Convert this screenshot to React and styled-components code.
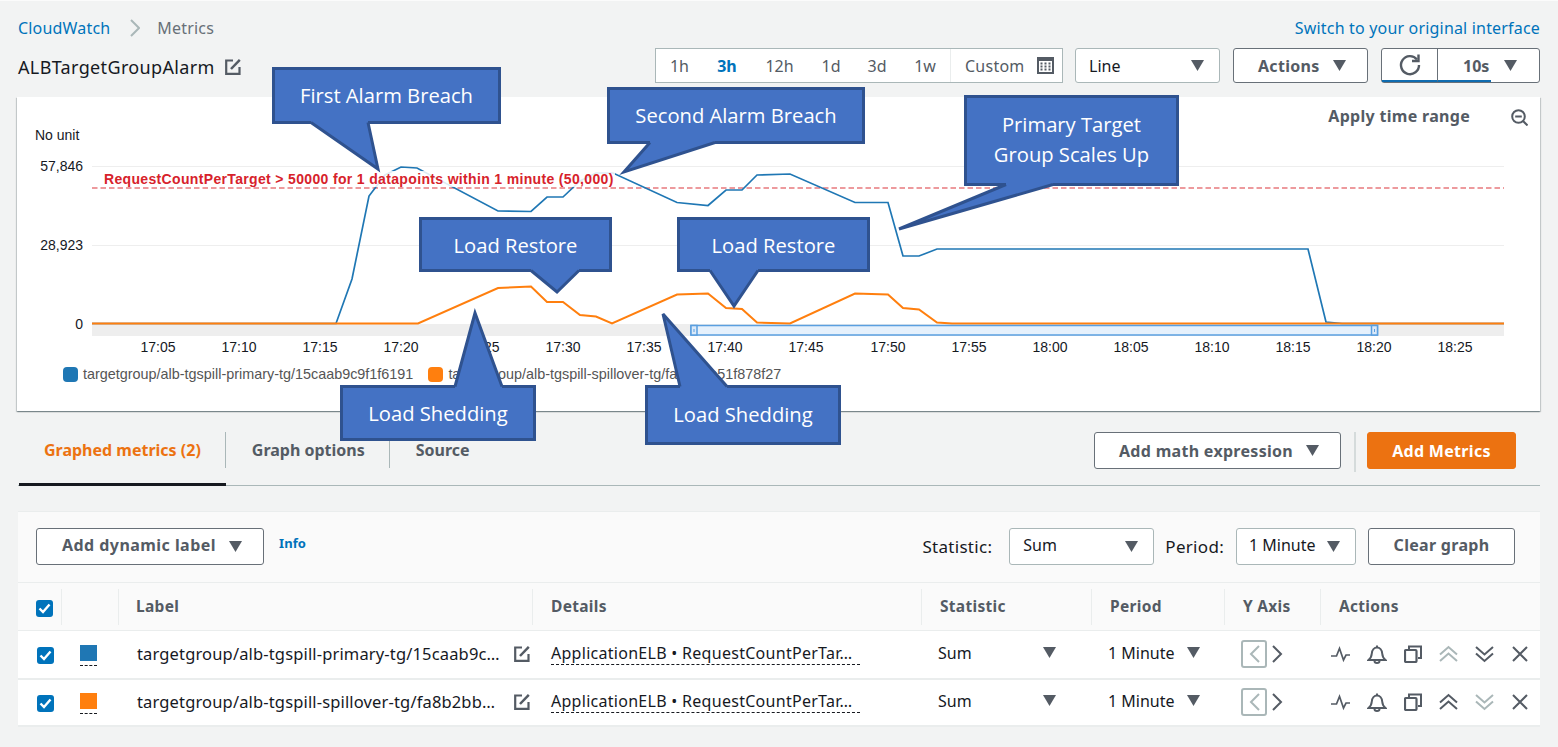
import React from 'react';
import styled, { createGlobalStyle } from 'styled-components';

const UI_FONT = '"Noto Sans", "Open Sans", sans-serif';
const COLUMNS = '44px 57px 414px 389px 170px 133px 96px 1fr';

const BLUE_LINE = '92,323.5 336,323.5 352,279 369,196 385,175 401,167 417,168 498,211 531,211.5 547,197 563,197 580,181 596,173 613,173 677,202.5 708,205.5 726,190 742,190 757,175 790,174 855,202.5 888,202.5 903,256 919,256 937,249 1308,249 1326,322 1342,323.5 1504,323.5';
const ORANGE_LINE = '92,323.5 418,323.5 498,288 531,286.5 547,302 563,302 580,315 596,316.5 612,323.5 677,294.5 708,293.5 726,308 742,309 757,322.5 790,323.5 855,293.5 888,294.5 903,308 919,309.5 937,322.5 952,323.5 1504,323.5';

const TICKS = [
  ['17:05', 158], ['17:10', 239], ['17:15', 320], ['17:20', 401], ['17:25', 482], ['17:30', 563],
  ['17:35', 644], ['17:40', 725], ['17:45', 806], ['17:50', 888], ['17:55', 969], ['18:00', 1050],
  ['18:05', 1131], ['18:10', 1212], ['18:15', 1293], ['18:20', 1374], ['18:25', 1455],
];

const RANGES = [
  ['1h', 47], ['3h', 48, true], ['12h', 57], ['1d', 46], ['3d', 46], ['1w', 50],
];

const CALLOUTS = [
  { lines: ['First Alarm Breach'], box: [272, 67, 229, 57], base: [311, 368], tip: [378, 168], lift: 2 },
  { lines: ['Second Alarm Breach'], box: [607, 87, 258, 57], base: [650, 715], tip: [624, 171], lift: 2 },
  { lines: ['Primary Target', 'Group Scales Up'], box: [964, 95, 215, 91], base: [1006, 1053], tip: [899, 228], lift: 3 },
  { lines: ['Load Restore'], box: [419, 217, 193, 55], base: [531, 579], tip: [557, 291], lift: 0 },
  { lines: ['Load Restore'], box: [677, 217, 193, 55], base: [710, 758], tip: [734, 305], lift: 0 },
  { lines: ['Load Shedding'], box: [340, 385, 196, 56], base: [455, 502], tip: [475, 312], up: true, lift: 0 },
  { lines: ['Load Shedding'], box: [645, 385, 196, 60], base: [680, 727], tip: [663, 313], up: true, lift: 3 },
];

const ROWS = [
  { color: '#1f77b4', label: 'targetgroup/alb-tgspill-primary-tg/15caab9c…', upOff: true },
  { color: '#ff7f0e', label: 'targetgroup/alb-tgspill-spillover-tg/fa8b2bb…', downOff: true },
];

const GlobalStyle = createGlobalStyle`
  html, body {
    margin: 0;
    background: #f2f3f3;
  }
  * {
    box-sizing: border-box;
  }
`;

const Caret = () => (
  <CaretSvg width="13" height="11" viewBox="0 0 13 11">
    <polygon points="0,0 13,0 6.5,11" />
  </CaretSvg>
);

const EditIcon = () => (
  <IconSvg width="16" height="17" viewBox="0 0 16 17">
    <path d="M8 2.500H1.200v13.300h13.300V9" strokeWidth="2.200" />
    <path d="M6 11L14.800 1.800" strokeWidth="2.500" />
  </IconSvg>
);

const PulseIcon = () => (
  <IconSvg width="19" height="18" viewBox="0 0 19 18">
    <path d="M0 11h5.500l3-7.500 4 11.500 2.500-5h4" strokeWidth="1.700" />
  </IconSvg>
);

const BellIcon = () => (
  <IconSvg width="20" height="20" viewBox="0 0 20 20">
    <path d="M1.500 16h17c-2-1.500-3-3-3.300-6.500-.3-3.500-2.500-6-5.200-6s-4.900 2.500-5.200 6c-.3 3.500-1.300 5-3.300 6.500z" strokeWidth="2" />
    <path d="M10 1.500v2M7.500 17c0 2.500 5 2.500 5 0" strokeWidth="2" />
  </IconSvg>
);

const CopyIcon = () => (
  <IconSvg width="18" height="18" viewBox="0 0 18 18">
    <rect x="1" y="5" width="11.500" height="12" rx="1" strokeWidth="2.200" />
    <path d="M5 4V1.500h12V13h-3" strokeWidth="2" />
  </IconSvg>
);

const DoubleChevron = ({ up, off }) => (
  <IconSvg width="19" height="18" viewBox="0 0 19 18" $off={off}>
    <path d={up ? 'M1 9.500L9.500 2 18 9.500M1 16l8.500-7.500L18 16' : 'M1 2l8.500 7.500L18 2M1 8.500L9.500 16 18 8.500'} strokeWidth="2" />
  </IconSvg>
);

const CloseIcon = () => (
  <IconSvg width="18" height="18" viewBox="0 0 18 18">
    <path d="M2 2l14 14M16 2L2 16" strokeWidth="2" />
  </IconSvg>
);

const Chevron = ({ left, off }) => (
  <IconSvg width="11" height="18" viewBox="0 0 11 18" $off={off}>
    <path d={left ? 'M10 1L2 9l8 8' : 'M1 1l8 8-8 8'} strokeWidth="2" />
  </IconSvg>
);

const CheckBox = () => (
  <CheckBoxBox>
    <svg width="13" height="11" viewBox="0 0 13 11" fill="none" stroke="#fff" strokeWidth="2.400">
      <path d="M1.500 5.500l3.500 3.500 6.500-7.500" />
    </svg>
  </CheckBoxBox>
);

const Callout = ({ lines, box, base, tip, up, lift }) => {
  const [x, y, w, h] = box;
  const edge = up ? 1.5 : h - 1.5;
  const inner = up ? 4 : h - 4;
  const tipX = tip[0] - x;
  const tipY = tip[1] - y + 1;
  const left = base[0] - x;
  const right = base[1] - x;
  return (
    <CalloutBox $x={x} $y={y} $w={w} $h={h}>
      <CalloutText $lift={lift}>
        {lines.map((line) => <div key={line}>{line}</div>)}
      </CalloutText>
      <CalloutTail width="1" height="1">
        <polygon
          points={`${left},${inner} ${left},${edge} ${tipX},${tipY} ${right},${edge} ${right},${inner}`}
          fill="#4472c4"
        />
        <polyline
          points={`${left},${edge} ${tipX},${tipY} ${right},${edge}`}
          fill="none"
          stroke="#2f528f"
          strokeWidth="3"
        />
      </CalloutTail>
    </CalloutBox>
  );
};

const Chart = () => (
  <ChartSvg width="1523" height="235" viewBox="17 125 1523 235">
    <AxisText x="35" y="140" fill="#444">No unit</AxisText>
    <line x1="92" x2="1504" y1="166.500" y2="166.500" stroke="#eeeeee" />
    <line x1="92" x2="1504" y1="245.500" y2="245.500" stroke="#eeeeee" />
    <line x1="92" x2="1504" y1="188" y2="188" stroke="#e8797e" strokeWidth="1.500" strokeDasharray="5.500 3" />
    <AxisText x="83" y="171" textAnchor="end">57,846</AxisText>
    <AxisText x="83" y="250" textAnchor="end">28,923</AxisText>
    <AxisText x="83" y="329" textAnchor="end">0</AxisText>
    <rect x="92" y="324" width="1412" height="12" fill="#eeeeee" />
    <polyline points={BLUE_LINE} fill="none" stroke="#1f77b4" strokeWidth="1.700" />
    <polyline points={ORANGE_LINE} fill="none" stroke="#ff7f0e" strokeWidth="2" />
    <rect x="102" y="171" width="513" height="16" fill="#fff" fillOpacity="0.85" />
    <ThresholdText x="104" y="184">RequestCountPerTarget &gt; 50000 for 1 datapoints within 1 minute (50,000)</ThresholdText>
    <rect x="691" y="325.500" width="686.500" height="9.500" fill="#e6f1fc" stroke="#5a9fe0" strokeWidth="1.500" />
    <rect x="691" y="325.500" width="6" height="9.500" fill="#dbe9f8" stroke="#5a9fe0" strokeWidth="1.500" />
    <rect x="693.500" y="329" width="1" height="3" fill="#5a9fe0" />
    <rect x="1371.500" y="325.500" width="6" height="9.500" fill="#dbe9f8" stroke="#5a9fe0" strokeWidth="1.500" />
    <rect x="1374" y="329" width="1" height="3" fill="#5a9fe0" />
    {TICKS.map(([label, x]) => (
      <AxisText key={label} x={x} y="352" textAnchor="middle">{label}</AxisText>
    ))}
  </ChartSvg>
);

const App = () => {
  return (
    <Page>
      <GlobalStyle />

      <BreadcrumbRow>
        <Crumbs>
          <LinkText>CloudWatch</LinkText>
          <CrumbSeparator width="10" height="18" viewBox="0 0 10 18">
            <path d="M1 1l8 8-8 8" />
          </CrumbSeparator>
          <CurrentCrumb>Metrics</CurrentCrumb>
        </Crumbs>
        <LinkText>Switch to your original interface</LinkText>
      </BreadcrumbRow>

      <HeaderRow>
        <TitleGroup>
          <Title>ALBTargetGroupAlarm</Title>
          <EditIcon />
        </TitleGroup>
        <TimeRange>
          {RANGES.map(([label, width, active]) => (
            <TimeItem key={label} $w={width} $active={active}>{label}</TimeItem>
          ))}
          <CustomRange>
            Custom
            <svg width="17" height="17" viewBox="0 0 17 17" fill="#545b64">
              <path d="M0 0h17v17H0zM2 4v11h13V4z" />
              <path d="M3.500 5.500h2v2h-2zM7.500 5.500h2v2h-2zM11.500 5.500h2v2h-2zM3.500 8.500h2v2h-2zM7.500 8.500h2v2h-2zM11.500 8.500h2v2h-2zM3.500 11.500h2v2h-2zM7.500 11.500h2v2h-2zM11.500 11.500h2v2h-2z" />
            </svg>
          </CustomRange>
        </TimeRange>
        <SelectBox $w={145} $left={13}>
          <span>Line</span>
          <Caret />
        </SelectBox>
        <Button $w={135} $split>
          Actions
          <Caret />
        </Button>
        <RefreshGroup>
          <RefreshButton>
            <svg width="24" height="24" viewBox="0 0 24 24" fill="none" stroke="#545b64" strokeWidth="2.400">
              <path d="M19 6.500A9 9 0 1 0 21 12" />
              <path d="M20.500 1.500v6.500h-6.500" />
            </svg>
          </RefreshButton>
          <RefreshInterval>
            10s
            <Caret />
          </RefreshInterval>
        </RefreshGroup>
      </HeaderRow>

      <ChartCard>
        <CardTop>
          <ApplyRange>Apply time range</ApplyRange>
          <svg width="17" height="17" viewBox="0 0 17 17" fill="none" stroke="#545b64" strokeWidth="2">
            <circle cx="7.500" cy="7.500" r="6.300" />
            <path d="M4.200 7.500h6.600M12 12l4.500 4.500" />
          </svg>
        </CardTop>
        <Chart />
        <Legend>
          <LegendItem>
            <LegendSwatch $color="#1f77b4" />
            targetgroup/alb-tgspill-primary-tg/15caab9c9f1f6191
          </LegendItem>
          <LegendItem>
            <LegendSwatch $color="#ff7f0e" />
            targetgroup/alb-tgspill-spillover-tg/fa8b2bb51f878f27
          </LegendItem>
        </Legend>
      </ChartCard>

      <TabBar>
        <Tabs>
          <Tab $active>
            <TabLabel $active $first $divider>Graphed metrics (2)</TabLabel>
          </Tab>
          <Tab>
            <TabLabel $divider>Graph options</TabLabel>
          </Tab>
          <Tab>
            <TabLabel>Source</TabLabel>
          </Tab>
        </Tabs>
        <TabActions>
          <Button $w={247} $h={37} $split>
            Add math expression
            <Caret />
          </Button>
          <ActionDivider />
          <Button $w={149} $h={37} $ml={11} $primary>Add Metrics</Button>
        </TabActions>
      </TabBar>

      <Panel>
        <PanelToolbar>
          <ToolbarGroup>
            <Button $w={228} $h={37} $ml={0} $split>
              <DynamicLabelText>Add dynamic label</DynamicLabelText>
              <Caret />
            </Button>
            <InfoLink>Info</InfoLink>
          </ToolbarGroup>
          <ToolbarGroup>
            <FieldLabel $left={12} $right={17}>Statistic:</FieldLabel>
            <SelectBox $w={145} $h={37} $left={13} $ml={0}>
              <ButtonText>Sum</ButtonText>
              <Caret />
            </SelectBox>
            <FieldLabel $left={11} $right={12}>Period:</FieldLabel>
            <SelectBox $w={120} $h={37} $left={12} $ml={0}>
              <ButtonText>1 Minute</ButtonText>
              <Caret />
            </SelectBox>
            <Button $w={147} $h={37} $ml={12}>
              <ButtonText>Clear graph</ButtonText>
            </Button>
          </ToolbarGroup>
        </PanelToolbar>

        <HeaderGrid>
          <CheckHeadCell $pad={18}><CheckBox /></CheckHeadCell>
          <HeadCell />
          <HeadCell $pad={17}>Label</HeadCell>
          <HeadCell>Details</HeadCell>
          <HeadCell>Statistic</HeadCell>
          <HeadCell>Period</HeadCell>
          <HeadCell>Y Axis</HeadCell>
          <HeadCell $last>Actions</HeadCell>
        </HeaderGrid>

        {ROWS.map((row, index) => (
          <RowGrid key={row.label} $h={index === 0 ? 49 : 47}>
            <MarkerCell $pad={19}><CheckBox /></MarkerCell>
            <MarkerCell $pad={18}><ColorSwatch $color={row.color} /></MarkerCell>
            <LabelCell>
              <LabelText>{row.label}</LabelText>
              <EditIcon />
            </LabelCell>
            <RowCell $pad={18}>
              <DetailsText>ApplicationELB • RequestCountPerTar…</DetailsText>
            </RowCell>
            <DropdownCell $pad={16} $w={118}>
              <span>Sum</span>
              <Caret />
            </DropdownCell>
            <DropdownCell $pad={16} $w={92}>
              <span>1 Minute</span>
              <Caret />
            </DropdownCell>
            <AxisCell>
              <AxisToggle><Chevron left off /></AxisToggle>
              <Chevron />
            </AxisCell>
            <ActionsCell>
              <PulseIcon />
              <BellIcon />
              <CopyIcon />
              <DoubleChevron up off={row.upOff} />
              <DoubleChevron off={row.downOff} />
              <CloseIcon />
            </ActionsCell>
          </RowGrid>
        ))}
      </Panel>

      {CALLOUTS.map((callout) => (
        <Callout key={callout.box.join()} {...callout} />
      ))}
    </Page>
  );
};

const Page = styled.div`
  position: relative;
  width: 1558px;
  height: 747px;
  padding: 0 18px;
  overflow: hidden;
  font-family: ${UI_FONT};
  font-size: 16px;
  color: #16191f;
  background: #f2f3f3;
  border-top: 1px solid #fbfbfb;
`;

const BreadcrumbRow = styled.div`
  display: flex;
  align-items: center;
  justify-content: space-between;
  height: 37px;
  padding-top: 17px;
  letter-spacing: 0.18px;
`;

const Crumbs = styled.div`
  display: flex;
  align-items: center;
`;

const CrumbSeparator = styled.svg`
  margin: 0 17px 0 20px;
  fill: none;
  stroke: #aab7b8;
  stroke-width: 2;
`;

const LinkText = styled.span`
  color: #0073bb;
`;

const CurrentCrumb = styled.span`
  color: #687078;
`;

const HeaderRow = styled.div`
  display: flex;
  align-items: center;
  height: 35px;
  margin-top: 10px;
`;

const TitleGroup = styled.div`
  display: flex;
  align-items: center;
  gap: 10px;
  flex: 1;
  padding-top: 2px;
`;

const Title = styled.h1`
  margin: 0;
  font-size: 18px;
  font-weight: 400;
  letter-spacing: 0.35px;
`;

const IconSvg = styled.svg`
  flex: none;
  fill: none;
  stroke: ${(p) => (p.$off ? '#aab7b8' : '#545b64')};
`;

const CaretSvg = styled.svg`
  flex: none;
  fill: #545b64;
`;

const TimeRange = styled.div`
  display: flex;
  width: 408px;
  height: 35px;
  background: #fff;
  border: 1px solid #aab7b8;
`;

const TimeItem = styled.div`
  display: flex;
  align-items: center;
  justify-content: center;
  width: ${(p) => p.$w}px;
  color: ${(p) => (p.$active ? '#0073bb' : '#545b64')};
  font-weight: ${(p) => (p.$active ? 700 : 400)};
`;

const CustomRange = styled.div`
  display: flex;
  flex: 1;
  align-items: center;
  justify-content: space-between;
  padding: 0 8px 0 14px;
  color: #545b64;
  letter-spacing: 0.25px;
  border-left: 1px solid #eaeded;
`;

const SelectBox = styled.div`
  display: flex;
  align-items: center;
  justify-content: space-between;
  flex: none;
  width: ${(p) => p.$w}px;
  height: ${(p) => p.$h || 35}px;
  margin-left: ${(p) => (p.$ml === undefined ? 12 : p.$ml)}px;
  padding: 0 15px 0 ${(p) => p.$left}px;
  background: #fff;
  border: 1px solid #aab7b8;
  border-radius: 3px;
`;

const Button = styled.div`
  display: flex;
  align-items: center;
  justify-content: ${(p) => (p.$split ? 'space-between' : 'center')};
  flex: none;
  width: ${(p) => p.$w}px;
  height: ${(p) => p.$h || 35}px;
  margin-left: ${(p) => (p.$ml === undefined ? 13 : p.$ml)}px;
  padding: 0 ${(p) => (p.$split ? '21px 0 24px' : '0')};
  color: ${(p) => (p.$primary ? '#fff' : '#545b64')};
  font-weight: 700;
  letter-spacing: 0.3px;
  background: ${(p) => (p.$primary ? '#ec7211' : '#fff')};
  border: 1px solid ${(p) => (p.$primary ? '#ec7211' : '#687078')};
  border-radius: 3px;
`;

const ButtonText = styled.span`
  margin-top: -3px;
`;

const DynamicLabelText = styled(ButtonText)`
  margin-left: 1px;
  letter-spacing: 0.45px;
`;

const RefreshGroup = styled.div`
  display: flex;
  flex: none;
  width: 159px;
  height: 35px;
  margin-left: 13px;
  background: #fff;
  border: 1px solid #687078;
  border-radius: 3px;
`;

const RefreshButton = styled.div`
  display: flex;
  align-items: center;
  justify-content: center;
  width: 56px;
  border-right: 1px solid #687078;
  border-bottom: 2px solid #0f6cb0;
`;

const RefreshInterval = styled.div`
  position: relative;
  display: flex;
  flex: 1;
  align-items: center;
  gap: 15px;
  padding-left: 25px;
  color: #545b64;
  font-weight: 700;

  &::after {
    content: '';
    position: absolute;
    left: 0;
    bottom: 0;
    width: 53px;
    height: 2px;
    background: #0f6cb0;
  }
`;

const ChartCard = styled.section`
  width: 1523px;
  height: 314px;
  margin: 14px 0 0 -1px;
  background: #fff;
  box-shadow: 0 1px 1px 0 rgba(0, 28, 36, 0.3), 1px 1px 1px 0 rgba(0, 28, 36, 0.15), -1px 1px 1px 0 rgba(0, 28, 36, 0.15);
`;

const CardTop = styled.div`
  display: flex;
  align-items: flex-start;
  justify-content: flex-end;
  gap: 41px;
  height: 28px;
  padding: 8px 12px 0 0;

  svg {
    margin-top: 4px;
  }
`;

const ApplyRange = styled.span`
  color: #545b64;
  font-weight: 700;
  letter-spacing: 0.3px;
`;

const ChartSvg = styled.svg`
  display: block;
`;

const AxisText = styled.text`
  font-family: "Liberation Sans", Arial, sans-serif;
  font-size: 14px;
  fill: #16191f;
`;

const ThresholdText = styled.text`
  font-family: "Liberation Sans", Arial, sans-serif;
  font-size: 14px;
  font-weight: 700;
  letter-spacing: 0.34px;
  fill: #d7222b;
`;

const Legend = styled.div`
  display: flex;
  gap: 15px;
  padding: 5px 0 0 46px;
  font-family: "Liberation Sans", Arial, sans-serif;
  font-size: 14.400px;
  color: #555;
`;

const LegendItem = styled.div`
  display: flex;
  align-items: center;
  gap: 5px;
  height: 18px;
`;

const LegendSwatch = styled.span`
  width: 15px;
  height: 15px;
  background: ${(p) => p.$color};
  border-radius: 4px;
`;

const TabBar = styled.div`
  display: flex;
  justify-content: space-between;
  height: 54px;
  margin-top: 21px;
  border-bottom: 1px solid #aab7b8;
`;

const Tabs = styled.div`
  display: flex;
  padding-left: 1px;
`;

const Tab = styled.div`
  height: 54px;
  border-bottom: 3px solid ${(p) => (p.$active ? '#16191f' : 'transparent')};
`;

const TabLabel = styled.div`
  height: 36px;
  padding: 0 24px 0 ${(p) => (p.$first ? 25 : 26)}px;
  line-height: 36px;
  font-weight: 700;
  color: ${(p) => (p.$active ? '#ec7211' : '#545b64')};
  border-right: ${(p) => (p.$divider ? '1px solid #aab7b8' : 'none')};
`;

const TabActions = styled.div`
  display: flex;
  align-items: flex-start;
  padding-right: 24px;
`;

const ActionDivider = styled.div`
  width: 2px;
  height: 40px;
  margin-left: 13px;
  background: #d5dbdb;
`;

const Panel = styled.section`
  margin-top: 25px;
  background: #fafafa;
  border-top: 1px solid #eaeded;
`;

const PanelToolbar = styled.div`
  display: flex;
  align-items: flex-start;
  justify-content: space-between;
  height: 70px;
  padding: 16px 25px 0 18px;
`;

const ToolbarGroup = styled.div`
  display: flex;
  align-items: center;
`;

const InfoLink = styled.span`
  margin: -7px 0 0 15px;
  color: #0073bb;
  font-size: 13px;
  font-weight: 700;
  letter-spacing: 0.1px;
`;

const FieldLabel = styled.span`
  margin-left: ${(p) => p.$left}px;
  margin-right: ${(p) => p.$right}px;
  margin-top: -1px;
  font-size: 17px;
  letter-spacing: 0.3px;
`;

const HeaderGrid = styled.div`
  display: grid;
  grid-template-columns: ${COLUMNS};
  align-items: center;
  height: 49px;
  border-top: 1px solid #eaeded;
  border-bottom: 1px solid #eaeded;
`;

const HeadCell = styled.div`
  display: flex;
  align-items: center;
  height: 36px;
  padding: 0 0 2px ${(p) => p.$pad || 18}px;
  font-size: 15.500px;
  font-weight: 700;
  letter-spacing: 0.3px;
  color: #545b64;
  border-right: ${(p) => (p.$last ? 'none' : '1px solid #eaeded')};
`;

const CheckHeadCell = styled(HeadCell)`
  padding-top: 4px;
  padding-bottom: 0;
`;

const RowGrid = styled.div`
  display: grid;
  grid-template-columns: ${COLUMNS};
  align-items: center;
  height: ${(p) => p.$h}px;
  padding-bottom: 2px;
  background: #fff;
  border-bottom: 2px solid #eaeded;
`;

const RowCell = styled.div`
  display: flex;
  align-items: center;
  padding-left: ${(p) => p.$pad}px;
`;

const MarkerCell = styled(RowCell)`
  margin-top: 4px;
`;

const CheckBoxBox = styled.div`
  display: flex;
  align-items: center;
  justify-content: center;
  width: 17px;
  height: 17px;
  background: #0073bb;
  border-radius: 3px;
`;

const ColorSwatch = styled.div`
  width: 17px;
  height: 21px;
  background: linear-gradient(${(p) => p.$color}, ${(p) => p.$color}) top / 17px 16px no-repeat;
  border-bottom: 1px dashed #16191f;
`;

const LabelCell = styled(RowCell)`
  justify-content: space-between;
  padding: 0 3px 0 18px;
`;

const LabelText = styled.span`
  font-size: 16.500px;
  letter-spacing: 0.15px;
`;

const DetailsText = styled.span`
  width: 309px;
  letter-spacing: 0.28px;
  border-bottom: 1px dashed #16191f;
`;

const DropdownCell = styled(RowCell)`
  justify-content: space-between;
  width: ${(p) => p.$w}px;
  padding-bottom: 2px;
  box-sizing: content-box;
`;

const AxisCell = styled(RowCell)`
  gap: 5px;
  padding-left: 16px;
`;

const AxisToggle = styled.div`
  display: flex;
  align-items: center;
  justify-content: center;
  width: 26px;
  height: 28px;
  border: 2px solid #aab7b8;
  border-radius: 3px;
`;

const ActionsCell = styled(RowCell)`
  gap: 17px;
  padding-left: 10px;
`;

const CalloutBox = styled.div`
  position: absolute;
  left: ${(p) => p.$x}px;
  top: ${(p) => p.$y - 1}px;
  width: ${(p) => p.$w}px;
  height: ${(p) => p.$h}px;
  background: #4472c4;
  border: 3px solid #2f528f;
`;

const CalloutText = styled.div`
  display: flex;
  flex-direction: column;
  justify-content: center;
  height: 100%;
  padding-bottom: ${(p) => p.$lift}px;
  font-family: "Open Sans", "Noto Sans", sans-serif;
  font-size: 20.200px;
  line-height: 30px;
  text-align: center;
  color: #fff;
`;

const CalloutTail = styled.svg`
  position: absolute;
  left: -3px;
  top: -3px;
  overflow: visible;
`;

export default App;
